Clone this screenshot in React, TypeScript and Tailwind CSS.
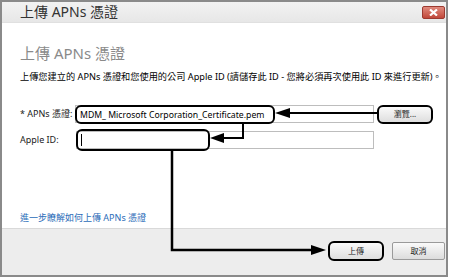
export default function App() {
  return (
    <div className="relative w-[450px] h-[278px] bg-white overflow-hidden font-['Noto_Sans','Noto_Sans_CJK_TC',sans-serif]">
      <div className="w-[448px] h-[277px] border-2 border-[#8a8a8a] flex flex-col bg-white">
        {/* title bar */}
        <div className="h-[20px] flex items-center justify-between bg-gradient-to-b from-[#f2f2f2] to-[#e7e7e7] pl-[18px] pr-[1px]">
          <span className="text-[14px] leading-[18px] text-[#333]">上傳 APNs 憑證</span>
          <div className="w-[23px] h-[13px] rounded-[2px] bg-gradient-to-b from-[#e08a7e] to-[#c0473a] border border-[#9c3a30] flex items-center justify-center">
            <svg width="9" height="7" viewBox="0 0 9 7">
              <path d="M1 0.5 L8 6.5 M8 0.5 L1 6.5" stroke="white" strokeWidth="2.2" />
            </svg>
          </div>
        </div>
        {/* body */}
        <div className="flex-1 flex flex-col pl-[18px] pt-[20px] pb-[4px] border-t border-[#e0e0e0]">
          <div className="text-[15px] leading-[20px] text-[#8a8a8a]">上傳 APNs 憑證</div>
          <div className="mt-[8px] text-[9.2px] leading-[12px] text-black whitespace-nowrap">
            上傳您建立的 APNs 憑證和您使用的公司 Apple ID (請儲存此 ID - 您將必須再次使用此 ID 來進行更新)。
          </div>
          <div className="mt-[22px] flex items-center h-[18px]">
            <div className="w-[55px] text-[9px] leading-[12px] text-[#222] whitespace-nowrap">* APNs 憑證:</div>
            <div className="w-[299px] h-[18px] border border-[#bdbdbd] flex items-start">
              <div className="-ml-px -mt-px h-[19px] w-[200px] border-2 border-black rounded-[6px] flex items-center pl-[3px] text-[8.7px] leading-[12px] text-black whitespace-nowrap">
                MDM_ Microsoft Corporation_Certificate.pem
              </div>
            </div>
            <button className="ml-[3px] w-[56px] h-[19px] border-2 border-black rounded-[6px] bg-gradient-to-b from-[#fafafa] to-[#dedede] text-[8px] leading-[10px] text-[#222]">
              瀏覽...
            </button>
          </div>
          <div className="mt-[8px] flex items-center h-[18px]">
            <div className="w-[56px] text-[9px] leading-[12px] text-[#222] whitespace-nowrap">Apple ID:</div>
            <div className="w-[298px] h-[18px] border border-[#bdbdbd] flex items-center">
              <div className="-ml-px h-[22px] w-[134px] border-2 border-black rounded-[6px] flex items-center pl-[3px]">
                <div className="w-px h-[12px] bg-black" />
              </div>
            </div>
          </div>
          <div className="mt-auto text-[9px] leading-[12px] text-[#2b6cb8] whitespace-nowrap">進一步瞭解如何上傳 APNs 憑證</div>
        </div>
        {/* footer */}
        <div className="h-[47px] bg-[#ededed] border-t border-[#d9d9d9] flex items-center justify-end gap-[8px] pr-[1px] pb-[2px]">
          <button className="w-[56px] h-[20px] border-2 border-black rounded-[6px] bg-gradient-to-b from-[#fafafa] to-[#dedede] text-[8px] leading-[10px] text-[#222]">
            上傳
          </button>
          <button className="w-[53px] h-[18px] border border-[#9a9a9a] rounded-[2px] bg-gradient-to-b from-[#fafafa] to-[#dcdcdc] text-[8px] leading-[10px] text-[#222]">
            取消
          </button>
        </div>
      </div>
      {/* callout arrows */}
      <svg className="absolute left-0 top-0 pointer-events-none" width="450" height="278" viewBox="0 0 450 278">
        <path d="M377 113 H286" stroke="black" strokeWidth="2" fill="none" />
        <polygon points="275,113 290,108 290,118" fill="black" />
        <path d="M243 122 V138 H220" stroke="black" strokeWidth="2" fill="none" />
        <polygon points="210,138 224,133 224,143" fill="black" />
        <path d="M172 150 V250 H314" stroke="black" strokeWidth="2.5" fill="none" />
        <polygon points="326,250 311,245 311,255" fill="black" />
      </svg>
    </div>
  );
}
